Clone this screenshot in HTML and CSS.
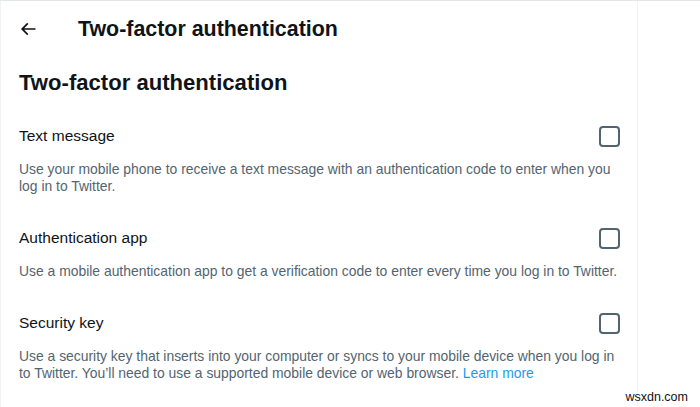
FILE: index.html
```html
<!DOCTYPE html>
<html>
<head>
<meta charset="utf-8">
<link rel="stylesheet" href="styles.css">
</head>
<body>
<div class="page">
  <main class="main">
    <header class="topbar">
      <span class="back">
        <svg viewBox="0 0 24 24" width="20" height="20"><path d="M7.414 13l5.043 5.04-1.414 1.42L3.586 12l7.457-7.46 1.414 1.42L7.414 11H21v2H7.414z"/></svg>
      </span>
      <h2 class="topbar-title">Two-factor authentication</h2>
    </header>
    <h1 class="heading">Two-factor authentication</h1>
    <div class="options">
      <section class="option">
        <div class="option-row">
          <span class="option-label">Text message</span>
          <span class="checkbox"></span>
        </div>
        <p class="option-desc">Use your mobile phone to receive a text message with an authentication code to enter when you log in to Twitter.</p>
      </section>
      <section class="option">
        <div class="option-row">
          <span class="option-label">Authentication app</span>
          <span class="checkbox"></span>
        </div>
        <p class="option-desc">Use a mobile authentication app to get a verification code to enter every time you log in to Twitter.</p>
      </section>
      <section class="option">
        <div class="option-row">
          <span class="option-label">Security key</span>
          <span class="checkbox"></span>
        </div>
        <p class="option-desc">Use a security key that inserts into your computer or syncs to your mobile device when you log in to Twitter. You’ll need to use a supported mobile device or web browser. <a class="link" href="#">Learn more</a></p>
      </section>
    </div>
  </main>
  <aside class="side"></aside>
</div>
<div class="watermark">wsxdn.com</div>
</body>
</html>
```
FILE: styles.css
```css
html, body {
  margin: 0;
  padding: 0;
  background: #ffffff;
}
body {
  font-family: "Liberation Sans", Arial, sans-serif;
  color: #0f1419;
  width: 700px;
  height: 407px;
  overflow: hidden;
  position: relative;
}
.page {
  display: flex;
  height: 407px;
  border-top: 1px solid #e3e6e8;
  box-sizing: border-box;
}
.main {
  width: 638px;
  border-left: 1px solid #eff3f4;
  border-right: 1px solid #eff3f4;
  box-sizing: border-box;
}
.side {
  flex: 1;
}
.topbar {
  display: flex;
  align-items: center;
  height: 56px;
  padding-left: 17px;
}
.back {
  display: flex;
  width: 20px;
  height: 20px;
  margin-right: 40px;
}
.back svg {
  fill: #0f1419;
}
.topbar-title {
  margin: 0;
  font-size: 21.4px;
  font-weight: 700;
}
.heading {
  margin: 13px 0 0 0;
  padding: 0 18px;
  font-size: 22.1px;
  font-weight: 700;
  line-height: 26px;
}
.options {
  display: flex;
  flex-direction: column;
  gap: 21px;
  margin-top: 18px;
}
.option {
  padding: 0 17px 0 18px;
}
.option-row {
  display: flex;
  align-items: center;
  justify-content: space-between;
  height: 44px;
}
.option-label {
  font-size: 15.5px;
}
.checkbox {
  width: 17px;
  height: 17px;
  border: 2px solid #536471;
  border-radius: 4px;
}
.option-desc {
  margin: 3px 0 0 0;
  font-size: 13.9px;
  line-height: 17px;
  color: #536471;
  max-width: 602px;
}
.link {
  color: #1d9bf0;
  text-decoration: none;
}
.watermark {
  position: absolute;
  right: 12px;
  top: 390px;
  line-height: 14px;
  font-family: "Liberation Sans", Arial, sans-serif;
  font-size: 12.5px;
  color: #111;
}
```
